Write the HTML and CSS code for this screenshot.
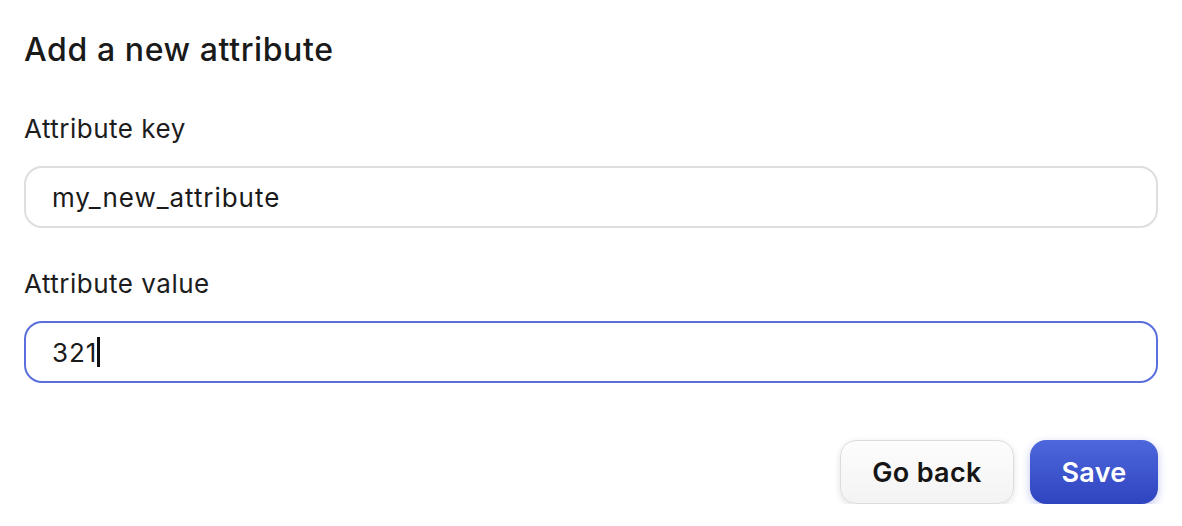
FILE: index.html
```html
<!DOCTYPE html>
<html>
<head>
<meta charset="utf-8">
<link rel="stylesheet" href="styles.css">
</head>
<body>
<div class="panel">
  <h1 class="title">Add a new attribute</h1>
  <div class="field">
    <label class="label">Attribute key</label>
    <div class="input">my_new_attribute</div>
  </div>
  <div class="field">
    <label class="label">Attribute value</label>
    <div class="input focused"><span>321</span><span class="caret"></span></div>
  </div>
  <div class="actions">
    <button class="btn secondary">Go back</button>
    <button class="btn primary">Save</button>
  </div>
</div>
</body>
</html>
```
FILE: styles.css
```css
* { box-sizing: border-box; }
html, body { margin: 0; background: #fff; }
body { font-family: Inter, "Noto Sans", sans-serif; color: #1a1a1a; }
.panel { padding: 28px 24px 0 24px; display: flex; flex-direction: column; }
.title { margin: 0; font-size: 32px; font-weight: 500; line-height: 44px; letter-spacing: 0.6px; }
.field { display: flex; flex-direction: column; margin-top: 41px; }
.field + .field { margin-top: 40px; }
.label { font-size: 26px; line-height: 32px; color: #1d1d1d; letter-spacing: 0.5px; }
.input { margin-top: 21px; height: 62px; border: 2px solid #dedede; border-radius: 18px; padding: 0 26px; display: flex; align-items: center; font-size: 26px; letter-spacing: 0.95px; color: #1a1a1a; }
.input.focused { border-color: #5a6fdc; }
.caret { display: inline-block; width: 3px; height: 30px; background: #111; margin-left: 0; }
.actions { display: flex; justify-content: flex-end; gap: 16px; margin-top: 57px; }
.btn { font-family: Inter, "Noto Sans", sans-serif; height: 64px; border-radius: 16px; font-size: 27px; font-weight: 600; padding: 0; cursor: pointer; letter-spacing: 0.3px; }
.secondary { background: linear-gradient(#fdfdfd, #f3f3f3); border: 1px solid #dcdcdc; color: #151515; box-shadow: 0 2px 6px rgba(0,0,0,0.12); width: 174px; }
.primary { background: linear-gradient(#4d67dc, #2f44c0); border: none; color: #fff; box-shadow: 0 3px 8px rgba(50,70,200,0.3); width: 128px; }
```
